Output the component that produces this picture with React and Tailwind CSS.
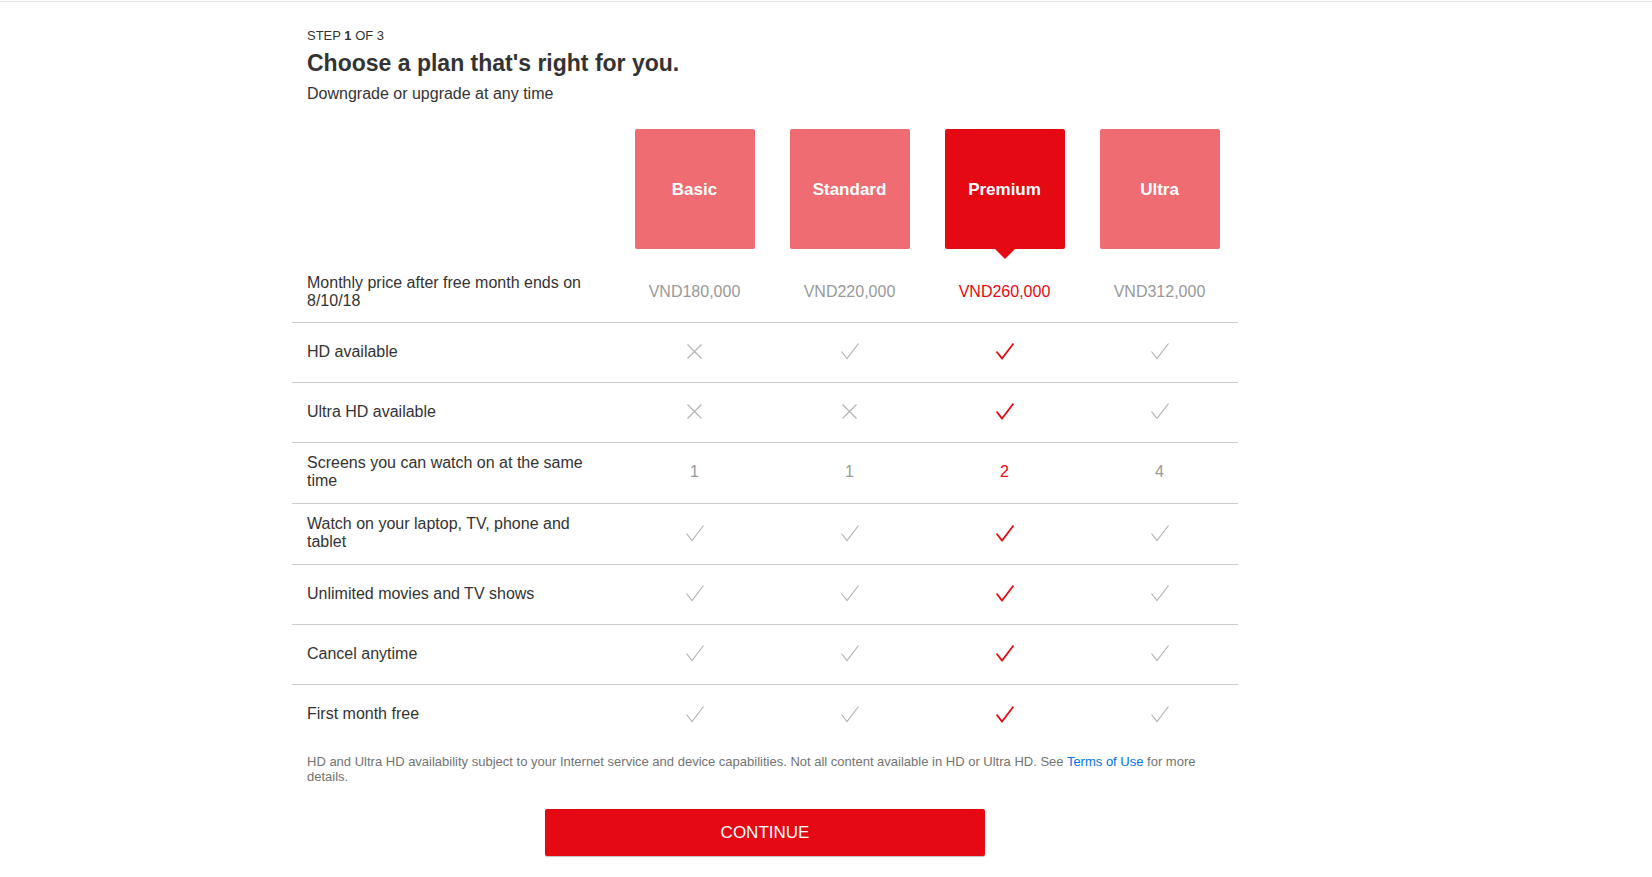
import React from "react";

const plans = ["Basic", "Standard", "Premium", "Ultra"];
const selected = 2;

const rows = [
  { label: "HD available", values: [false, true, true, true] },
  { label: "Ultra HD available", values: [false, false, true, true] },
  { label: "Screens you can watch on at the same time", values: ["1", "1", "2", "4"], tall: true },
  { label: "Watch on your laptop, TV, phone and tablet", values: [true, true, true, true], tall: true },
  { label: "Unlimited movies and TV shows", values: [true, true, true, true] },
  { label: "Cancel anytime", values: [true, true, true, true] },
  { label: "First month free", values: [true, true, true, true] },
];

function Check({ red }) {
  return (
    <svg width="18" height="17" viewBox="0 0 18 17" fill="none">
      <polyline
        points="0.5,8.5 6,15.5 17.5,0.5"
        stroke={red ? "#e50914" : "#b3b3b3"}
        strokeWidth={red ? 1.8 : 1.2}
        strokeLinejoin="miter"
      />
    </svg>
  );
}

function Cross() {
  return (
    <svg width="15" height="15" viewBox="0 0 15 15" fill="none">
      <path d="M0.5 0.5L14.5 14.5M14.5 0.5L0.5 14.5" stroke="#b3b3b3" strokeWidth="1.2" />
    </svg>
  );
}

function Cell({ value, active }) {
  let content;
  if (value === true) content = <Check red={active} />;
  else if (value === false) content = <Cross />;
  else
    content = (
      <span className={active ? "text-[#e50914]" : "text-[#999999]"}>{value}</span>
    );
  return <div className="flex items-center justify-center pb-[2px]">{content}</div>;
}

export default function App() {
  return (
    <div className="min-h-screen bg-white font-['Liberation_Sans',Arial,sans-serif] text-[#333333]">
      {/* top rule */}
      <div className="h-[2px] border-b border-[#e6e6e6]" />

      <div className="ml-[292px] w-[946px] pb-[22px]">
        {/* HEADER */}
        <div className="pl-[15px] pt-[26px]">
          <div className="text-[13px] leading-[15px] text-[#333333]">
            STEP <b>1</b> OF 3
          </div>
          <h1 className="mt-[6px] text-[23px] font-bold leading-[28px] text-[#333333]">
            Choose a plan that's right for you.
          </h1>
          <p className="mt-[7px] text-[16px] leading-[20px] text-[#333333]">
            Downgrade or upgrade at any time
          </p>
        </div>

        {/* PLAN BOXES */}
        <div className="mt-[25px] grid h-[134px] grid-cols-[325px_repeat(4,155px)]">
          <div />
          {plans.map((p, i) => (
            <div key={p} className="flex justify-center">
              <div
                className={`relative flex h-[120px] w-[120px] items-center justify-center rounded-[2px] pt-[1px] text-[17px] font-bold text-white ${
                  i === selected ? "bg-[#e50914]" : "bg-[#ee6c72]"
                }`}
              >
                {p}
                {i === selected && (
                  <div className="absolute left-1/2 top-full h-0 w-0 -translate-x-1/2 border-l-[10px] border-r-[10px] border-t-[10px] border-l-transparent border-r-transparent border-t-[#e50914]" />
                )}
              </div>
            </div>
          ))}
        </div>

        {/* PRICE ROW */}
        <div className="grid h-[60px] grid-cols-[325px_repeat(4,155px)] border-b border-[#cccccc] text-[16px]">
          <div className="flex items-center pb-[1px] pl-[15px] pr-[29px] leading-[18px]">
            Monthly price after free month ends on 8/10/18
          </div>
          {["VND180,000", "VND220,000", "VND260,000", "VND312,000"].map((v, i) => (
            <Cell key={v} value={v} active={i === selected} />
          ))}
        </div>

        {/* FEATURE ROWS */}
        {rows.map((r, idx) => (
          <div
            key={r.label}
            className={`grid grid-cols-[325px_repeat(4,155px)] text-[16px] ${
              r.tall ? "h-[61px]" : "h-[60px]"
            } ${idx < rows.length - 1 ? "border-b border-[#cccccc]" : ""}`}
          >
            <div className="flex items-center pb-[2px] pl-[15px] pr-[29px] leading-[18px]">{r.label}</div>
            {r.values.map((v, i) => (
              <Cell key={i} value={v} active={i === selected} />
            ))}
          </div>
        ))}

        {/* FOOTNOTE */}
        <p className="mt-[9px] px-[15px] text-[13px] leading-[15px] text-[#737373]">
          HD and Ultra HD availability subject to your Internet service and device capabilities. Not all
          content available in HD or Ultra HD. See <a href="#" className="text-[#0071eb]">Terms of Use</a> for
          more details.
        </p>

        {/* CONTINUE */}
        <div className="mt-[25px] flex justify-center">
          <button className="h-[47px] w-[440px] rounded-[2px] bg-[#e50914] text-[17px] text-white shadow-[0_1px_1px_rgba(0,0,0,0.25)]">
            CONTINUE
          </button>
        </div>
      </div>
    </div>
  );
}
